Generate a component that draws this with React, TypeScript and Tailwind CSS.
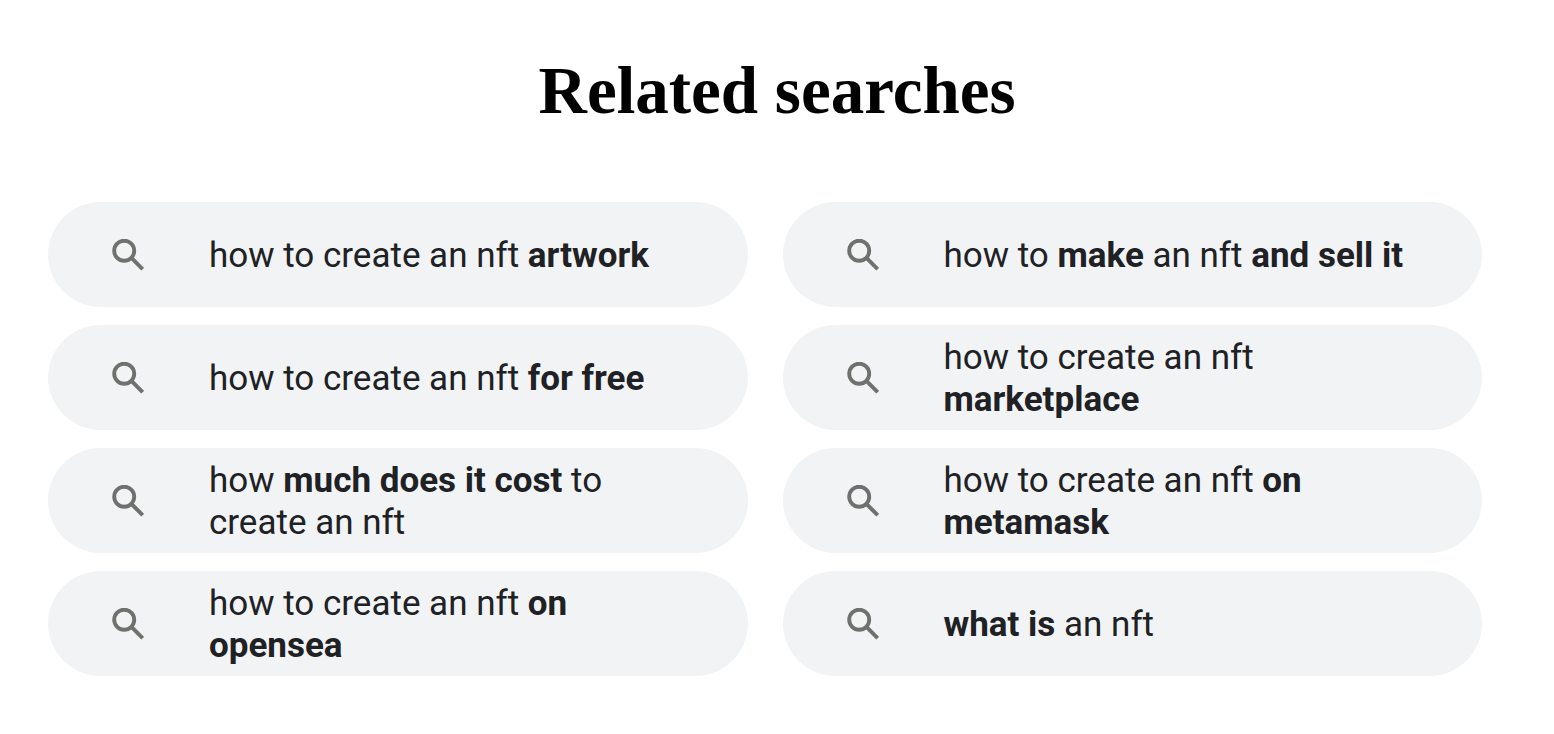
type Part = { text: string; bold?: boolean };

const searches: Part[][] = [
  [{ text: "how to create an nft " }, { text: "artwork", bold: true }],
  [
    { text: "how to " },
    { text: "make", bold: true },
    { text: " an nft " },
    { text: "and sell it", bold: true },
  ],
  [{ text: "how to create an nft " }, { text: "for free", bold: true }],
  [{ text: "how to create an nft " }, { text: "marketplace", bold: true }],
  [
    { text: "how " },
    { text: "much does it cost", bold: true },
    { text: " to create an nft" },
  ],
  [{ text: "how to create an nft " }, { text: "on metamask", bold: true }],
  [{ text: "how to create an nft " }, { text: "on opensea", bold: true }],
  [{ text: "what is", bold: true }, { text: " an nft" }],
];

function SearchIcon() {
  return (
    <svg
      className="h-8 w-8 shrink-0 text-[#70716f]"
      viewBox="0 0 32 32"
      fill="none"
      stroke="currentColor"
      aria-hidden="true"
    >
      <circle cx="12.2" cy="11.7" r="10" strokeWidth="3.9" />
      <path d="M19.4 18.9 30.7 30.2" strokeWidth="4" />
    </svg>
  );
}

function SearchPill({ parts }: { parts: Part[] }) {
  return (
    <a
      href="#"
      className="flex min-h-[105px] items-center rounded-full bg-[#f1f3f5] px-16 text-[#202124] hover:bg-gray-200"
    >
      <SearchIcon />
      <span className="ml-[65px] pt-0.5 text-[35px] leading-[42px]">
        {parts.map((part) =>
          part.bold ? (
            <b key={part.text} className="font-bold">
              {part.text}
            </b>
          ) : (
            part.text
          )
        )}
      </span>
    </a>
  );
}

function App() {
  return (
    <main className="min-h-screen bg-white pt-12 pr-[72px] pb-12 pl-12 font-[Roboto,sans-serif]">
      <h1 className="pl-6 text-center font-['Liberation_Serif',serif] text-[67px] leading-[84px] font-bold text-black">
        Related searches
      </h1>
      <div className="mt-[70px] grid grid-cols-2 gap-x-[35px] gap-y-[18px]">
        {searches.map((parts, i) => (
          <SearchPill key={i} parts={parts} />
        ))}
      </div>
    </main>
  );
}

export default App;
